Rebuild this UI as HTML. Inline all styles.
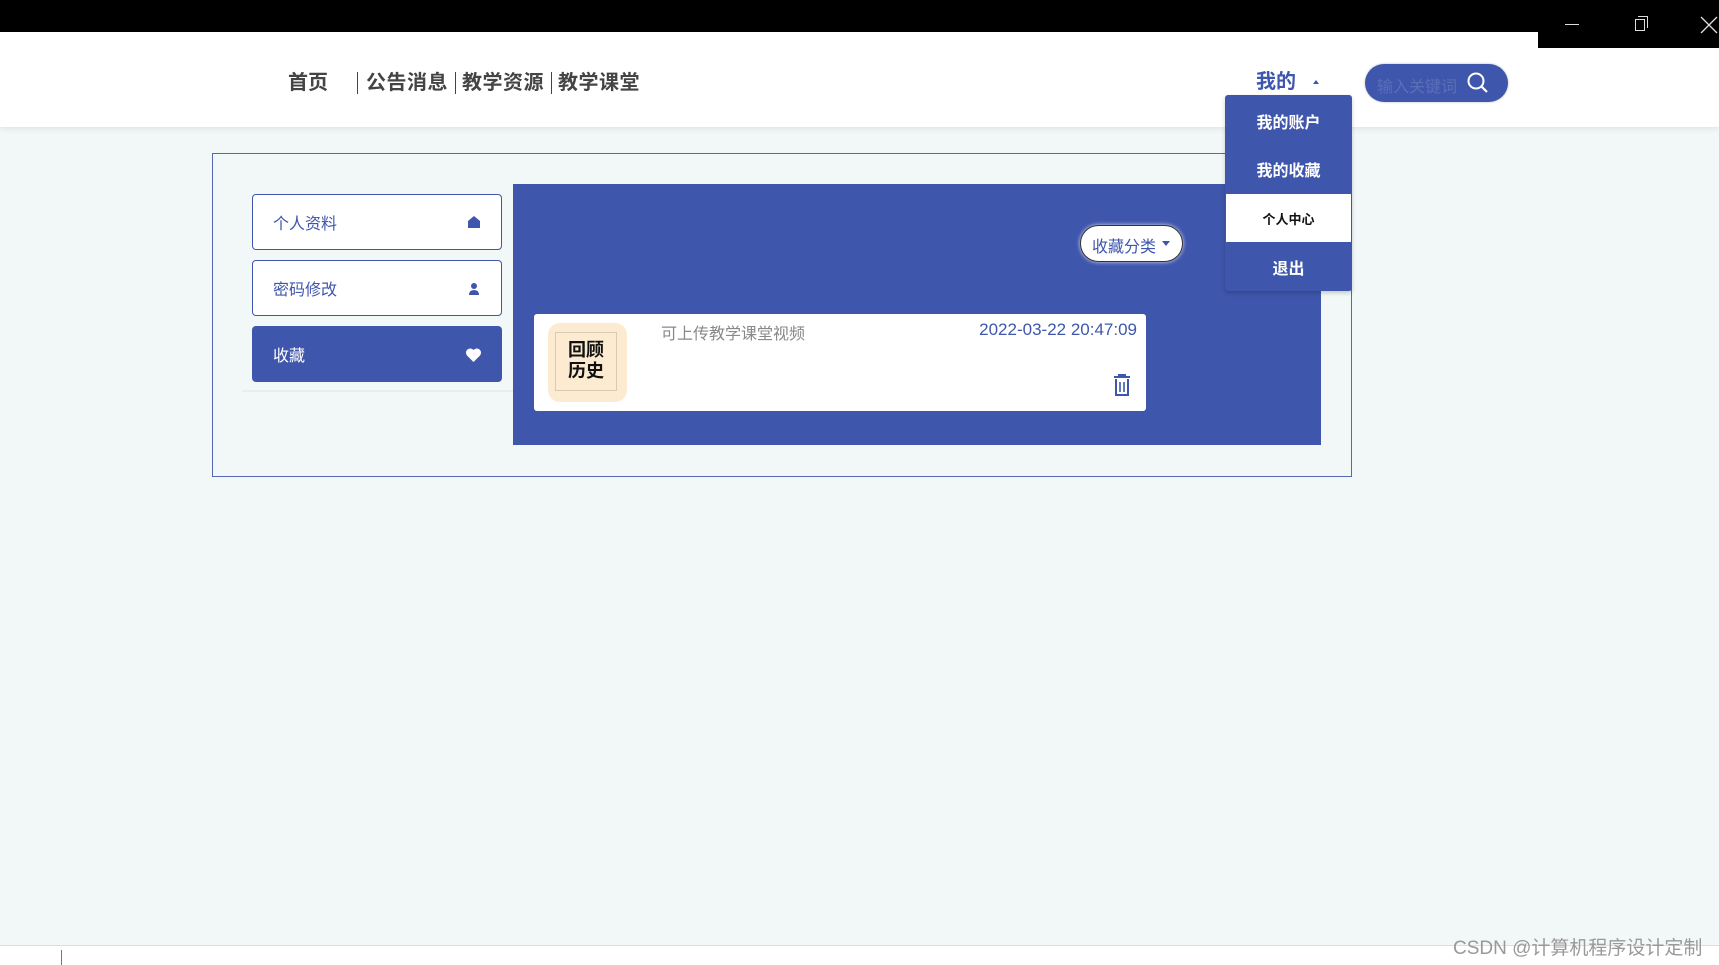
<!DOCTYPE html>
<html><head><meta charset="utf-8"><style>
*{margin:0;padding:0;box-sizing:border-box}
body{width:1719px;height:965px;overflow:hidden;background:#f2f7f8;font-family:"Liberation Sans","Noto Sans CJK SC",sans-serif;position:relative}
.a{position:absolute}
</style></head><body>
<div class="a" style="left:0;top:0;width:1719px;height:32px;background:#000"></div>
<div class="a" style="left:0;top:32px;width:1719px;height:95px;background:#fff;box-shadow:0 2px 5px rgba(0,0,0,.08)"></div>
<div class="a" style="left:1538px;top:0;width:181px;height:48px;background:#000"></div>
<div class="a" style="left:1565px;top:24px;width:14px;height:1px;background:#ddd"></div>
<div class="a" style="left:1635px;top:19px;width:10px;height:12px;border:1px solid #ddd"></div>
<div class="a" style="left:1638px;top:16px;width:10px;height:12px;border-top:1px solid #ddd;border-right:1px solid #ddd"></div>
<svg class="a" style="left:1700px;top:16px" width="19" height="18"><path d="M1 1L17 17M17 1L1 17" stroke="#ddd" stroke-width="1.3"/></svg>
<div class="a" style="left:288px;top:66px;font-size:20px;font-weight:bold;color:#444;white-space:nowrap">首页</div>
<div class="a" style="left:357px;top:66px;font-size:20px;font-weight:bold;color:#444;white-space:nowrap;letter-spacing:0.5px">
<span style="border-left:1.5px solid #444;padding-left:8px">公告消息</span><span style="border-left:1.5px solid #444;padding:0 0 0 6px;margin-left:7px">教学资源</span><span style="border-left:1.5px solid #444;padding:0 0 0 6px;margin-left:7px">教学课堂</span></div>
<div class="a" style="left:1256px;top:65px;font-size:20px;font-weight:bold;color:#3f56ad">我的</div>
<div class="a" style="left:1313px;top:80px;width:0;height:0;border-left:3px solid transparent;border-right:3px solid transparent;border-bottom:4px solid #3f56ad"></div>
<div class="a" style="left:1365px;top:64px;width:143px;height:38px;border-radius:19px;background:#3f56ad;box-shadow:0 0 2px rgba(0,0,0,.3)"></div>
<div class="a" style="left:1377px;top:73px;font-size:16px;color:#5a6fb8">输入关键词</div>
<svg class="a" style="left:1466px;top:71px" width="24" height="24"><circle cx="10" cy="10" r="7.5" fill="none" stroke="#fff" stroke-width="2"/><path d="M15.5 15.5L21 21" stroke="#fff" stroke-width="2.2"/></svg>
<div class="a" style="left:212px;top:153px;width:1140px;height:324px;border:1.5px solid #5468b3"></div>
<div class="a" style="left:242px;top:390px;width:272px;height:2px;background:#e8eeef"></div>
<div class="a" style="left:252px;top:194px;width:250px;height:56px;border:1.5px solid #3f56ad;border-radius:4px;background:#fff"></div>
<div class="a" style="left:273px;top:210px;font-size:16px;color:#3f56ad">个人资料</div>
<svg class="a" style="left:467px;top:215px" width="14" height="14"><path d="M7 1L13 6V13H1V6Z" fill="#3f56ad"/></svg>
<div class="a" style="left:252px;top:260px;width:250px;height:56px;border:1.5px solid #3f56ad;border-radius:4px;background:#fff"></div>
<div class="a" style="left:273px;top:276px;font-size:16px;color:#3f56ad">密码修改</div>
<svg class="a" style="left:467px;top:282px" width="14" height="14"><circle cx="7" cy="4" r="3" fill="#3f56ad"/><path d="M2 13Q2 8 7 8Q12 8 12 13Z" fill="#3f56ad"/></svg>
<div class="a" style="left:252px;top:326px;width:250px;height:56px;border-radius:4px;background:#3f56ad"></div>
<div class="a" style="left:273px;top:342px;font-size:16px;color:#fff">收藏</div>
<svg class="a" style="left:465px;top:347px" width="17" height="16"><path d="M8.5 15L2 8.5A3.8 3.8 0 0 1 8.5 3A3.8 3.8 0 0 1 15 8.5Z" fill="#fff"/></svg>
<div class="a" style="left:513px;top:184px;width:808px;height:261px;background:#3f56ad"></div>
<div class="a" style="left:1080px;top:225px;width:103px;height:37px;border-radius:19px;background:#fff;border:1.5px solid #333;box-shadow:0 0 4px rgba(255,255,255,.8)"></div>
<div class="a" style="left:1092px;top:233px;font-size:16px;color:#3f56ad">收藏分类</div>
<div class="a" style="left:1162px;top:241px;border-left:4px solid transparent;border-right:4px solid transparent;border-top:5px solid #3f56ad"></div>
<div class="a" style="left:534px;top:314px;width:612px;height:97px;background:#fff;border-radius:3px"></div>
<div class="a" style="left:548px;top:323px;width:79px;height:79px;background:#fcebd0;border-radius:12px"></div>
<div class="a" style="left:555px;top:332px;width:62px;height:59px;border:1px solid #d8cbb4;text-align:center;font-size:18px;font-weight:bold;line-height:21px;padding-top:7px;color:#111">回顾<br>历史</div>
<div class="a" style="left:661px;top:320px;font-size:16px;color:#888">可上传教学课堂视频</div>
<div class="a" style="left:937px;top:320px;width:200px;text-align:right;font-size:17px;color:#3f56ad">2022-03-22 20:47:09</div>
<svg class="a" style="left:1112px;top:373px" width="20" height="24"><path d="M2 4H18M7 4V2H13V4M4 6V22H16V6" fill="none" stroke="#3f56ad" stroke-width="2"/><path d="M8 9V19M12 9V19" stroke="#3f56ad" stroke-width="1.6"/></svg>
<div class="a" style="left:1225px;top:95px;width:127px;height:196px;background:#3f56ad;border-radius:3px;box-shadow:0 2px 4px rgba(0,0,0,.2)"></div>
<div class="a" style="left:1225px;top:109px;width:127px;text-align:center;font-size:16px;font-weight:bold;color:#fff">我的账户</div>
<div class="a" style="left:1225px;top:157px;width:127px;text-align:center;font-size:16px;font-weight:bold;color:#fff">我的收藏</div>
<div class="a" style="left:1226px;top:194px;width:125px;height:48px;background:#fff"></div>
<div class="a" style="left:1225px;top:209px;width:127px;text-align:center;font-size:13px;font-weight:bold;color:#111">个人中心</div>
<div class="a" style="left:1225px;top:255px;width:127px;text-align:center;font-size:16px;font-weight:bold;color:#fff">退出</div>
<div class="a" style="left:0;top:945px;width:1719px;height:20px;background:#fff;border-top:1px solid #ddd"></div>
<div class="a" style="left:61px;top:950px;width:1px;height:15px;background:#777"></div>
<div class="a" style="left:1453px;top:933px;font-size:19px;color:#999;white-space:nowrap">CSDN @计算机程序设计定制</div>
</body></html>
